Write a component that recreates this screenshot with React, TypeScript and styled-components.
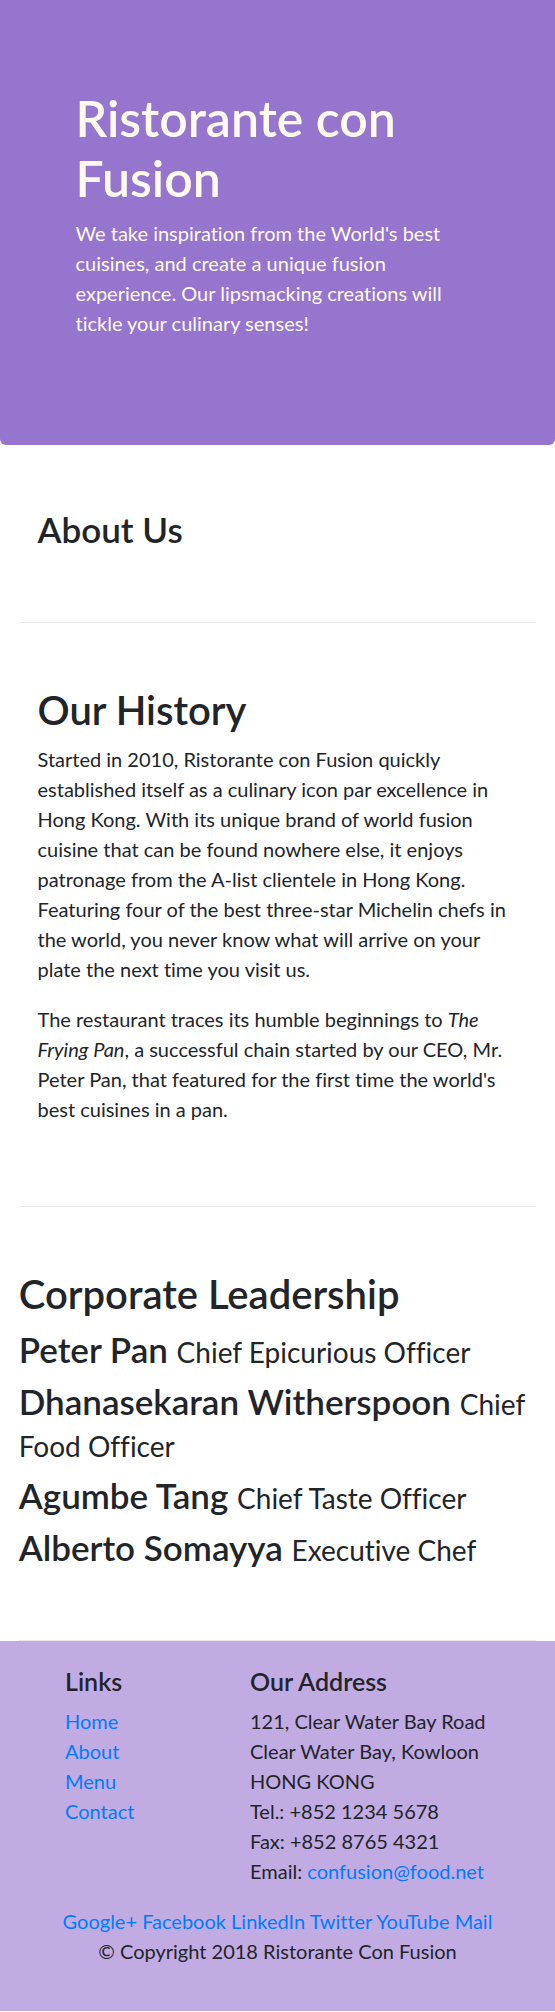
import styled, { createGlobalStyle } from 'styled-components'

const GlobalStyle = createGlobalStyle`
  * {
    box-sizing: border-box;
  }

  body {
    margin: 0;
    background-color: #fff;
    color: #212529;
    font-family: Lato, 'Noto Sans', sans-serif;
    font-size: 20px;
    line-height: 1.5;
    font-variant-ligatures: none;
    font-feature-settings: 'liga' 0, 'clig' 0;
  }
`

const leaders = [
  { name: 'Peter Pan', title: 'Chief Epicurious Officer' },
  { name: 'Dhanasekaran Witherspoon', title: 'Chief Food Officer' },
  { name: 'Agumbe Tang', title: 'Chief Taste Officer' },
  { name: 'Alberto Somayya', title: 'Executive Chef' },
]

const footerLinks = ['Home', 'About', 'Menu', 'Contact']
const socialLinks = ['Google+', 'Facebook', 'LinkedIn', 'Twitter', 'YouTube', 'Mail']

const App = () => {
  return (
    <>
      <GlobalStyle />
      <SJumbotron>
        <STitle>Ristorante con Fusion</STitle>
        <SLead>
          We take inspiration from the World's best cuisines, and create a unique fusion
          experience. Our lipsmacking creations will tickle your culinary senses!
        </SLead>
      </SJumbotron>

      <SContainer>
        <SSection>
          <SCol>
            <SH3>About Us</SH3>
          </SCol>
        </SSection>

        <SSection>
          <SCol>
            <SH2>Our History</SH2>
            <SParagraph>
              Started in 2010, Ristorante con Fusion quickly established itself as a culinary
              icon par excellence in Hong Kong. With its unique brand of world fusion cuisine
              that can be found nowhere else, it enjoys patronage from the A-list clientele in
              Hong Kong. Featuring four of the best three-star Michelin chefs in the world, you
              never know what will arrive on your plate the next time you visit us.
            </SParagraph>
            <SParagraph>
              The restaurant traces its humble beginnings to <em>The Frying Pan</em>, a
              successful chain started by our CEO, Mr. Peter Pan, that featured for the first
              time the world's best cuisines in a pan.
            </SParagraph>
          </SCol>
        </SSection>

        <SSection>
          <SH2>Corporate Leadership</SH2>
          {leaders.map((leader) => (
            <SH3 key={leader.name}>
              {leader.name} <SSmall>{leader.title}</SSmall>
            </SH3>
          ))}
        </SSection>
      </SContainer>

      <SFooter>
        <SFooterRow>
          <SLinksCol>
            <SH5>Links</SH5>
            <SList>
              {footerLinks.map((link) => (
                <li key={link}>
                  <SLink href="#">{link}</SLink>
                </li>
              ))}
            </SList>
          </SLinksCol>
          <SAddressCol>
            <SH5>Our Address</SH5>
            <SAddress>
              121, Clear Water Bay Road
              <br />
              Clear Water Bay, Kowloon
              <br />
              HONG KONG
              <br />
              Tel.: +852 1234 5678
              <br />
              Fax: +852 8765 4321
              <br />
              Email: <SLink href="#">confusion@food.net</SLink>
            </SAddress>
          </SAddressCol>
        </SFooterRow>
        <SSocial>
          {socialLinks.map((link, i) => (
            <span key={link}>
              <SLink href="#">{link}</SLink>
              {i < socialLinks.length - 1 ? ' ' : ''}
            </span>
          ))}
        </SSocial>
        <SCopyright>© Copyright 2018 Ristorante Con Fusion</SCopyright>
      </SFooter>
    </>
  )
}

export default App

// Header banner
const SJumbotron = styled.header`
  background-color: #9575cd;
  color: #fffaf0;
  padding: 87.5px 75.5px;
  border-radius: 0 0 6px 6px;
`

const STitle = styled.h1`
  margin: 0 0 10px;
  font-size: 50px;
  font-weight: 600;
  line-height: 1.2;
`

const SLead = styled.p`
  margin: 0 0 20px;
`

// Page body
const SContainer = styled.main`
  padding: 0 18.75px;
`

const SSection = styled.section`
  padding: 62.5px 0;
  border-bottom: 1px solid #e8e8e8;
`

const SCol = styled.div`
  padding: 0 18.75px;
`

const SH2 = styled.h2`
  margin: 0 0 10px;
  font-size: 40px;
  font-weight: 600;
  line-height: 1.2;
`

const SH3 = styled.h3`
  margin: 0 0 10px;
  font-size: 35px;
  font-weight: 600;
  line-height: 1.2;
`

const SSmall = styled.small`
  font-size: 80%;
  font-weight: 400;
`

const SParagraph = styled.p`
  margin: 0 0 20px;
`

// Footer
const SFooter = styled.footer`
  background-color: #c1abe3;
  padding: 25px 18.75px;
`

const SFooterRow = styled.div`
  display: flex;
  margin: 0 -18.75px;
`

const SLinksCol = styled.div`
  width: 185px;
  margin-left: 46.25px;
  padding: 0 18.75px;
`

const SAddressCol = styled.div`
  width: 323.75px;
  padding: 0 18.75px;
`

const SH5 = styled.h5`
  margin: 0 0 10px;
  font-size: 25px;
  font-weight: 600;
  line-height: 1.2;
`

const SList = styled.ul`
  list-style: none;
  margin: 0 0 20px;
  padding: 0;
`

const SAddress = styled.address`
  font-style: normal;
  margin: 0 0 20px;
`

const SLink = styled.a`
  color: #007bff;
  text-decoration: none;
`

const SSocial = styled.div`
  text-align: center;
`

const SCopyright = styled.p`
  margin: 0 0 20px;
  text-align: center;
`
